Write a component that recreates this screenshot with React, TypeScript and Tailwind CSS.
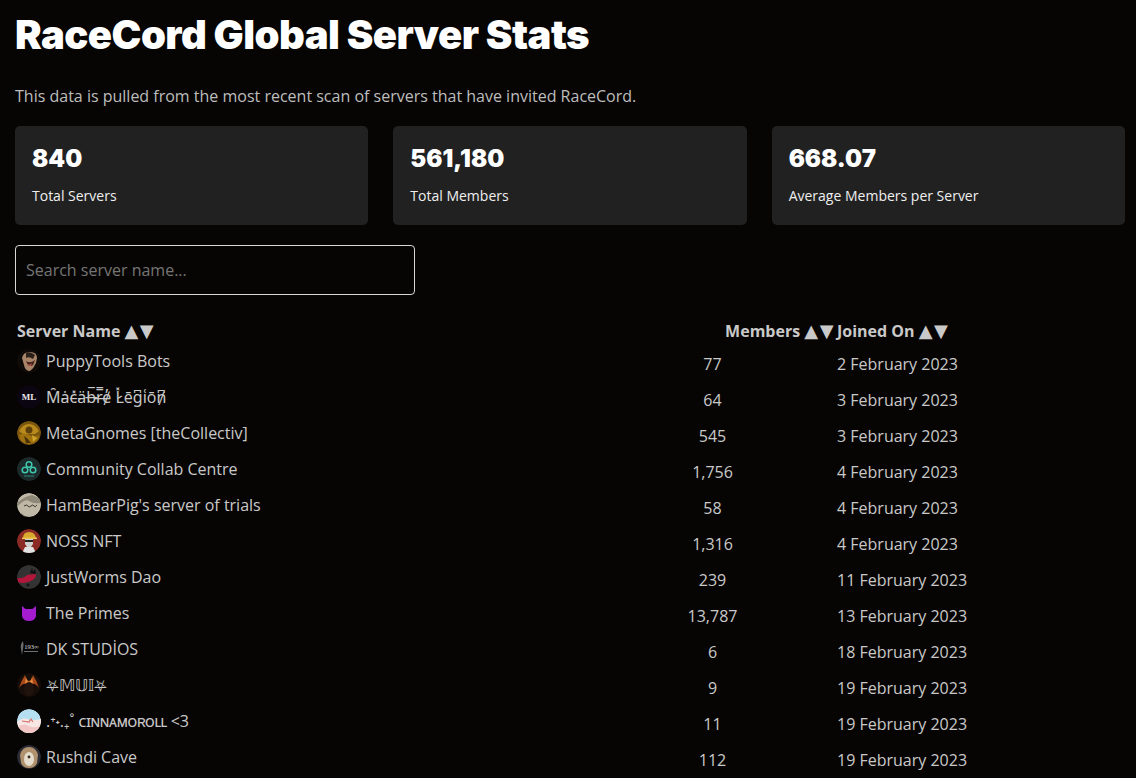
const stats = [
  { value: "840", label: "Total Servers" },
  { value: "561,180", label: "Total Members" },
  { value: "668.07", label: "Average Members per Server" },
];

function Avatar({ kind }: { kind: number }) {
  const shapes: Record<number, React.ReactNode> = {
    0: (
      <>
        <circle cx="12" cy="12" r="12" fill="#0e0b09" />
        <path d="M5 9q1-6 8-6t7 6l-1 5q-2 5-6 8-5 0-6-6z" fill="#a88469" />
        <path d="M9 4q4-2 9 2l-2 4q-4-3-7-1z" fill="#2b211b" />
        <path d="M9 12q4 3 9-1l-2 5q-3 2-5 0z" fill="#43201a" />
        <path d="M11 15q2 1 4-1l-1 3h-2z" fill="#a8524a" />
      </>
    ),
    1: (
      <>
        <circle cx="12" cy="12" r="12" fill="#0a0510" />
        <text x="12" y="15" textAnchor="middle" fontSize="9" fontWeight="700" fill="#ece6ec" fontFamily="'Liberation Serif',serif">
          ML
        </text>
      </>
    ),
    2: (
      <>
        <circle cx="12" cy="12" r="12" fill="#7b560f" />
        <path d="M2 10q4-7 10-7t10 7l-4 3H6z" fill="#b98a1c" />
        <circle cx="12" cy="9" r="3.5" fill="#5d3f0c" />
        <path d="M2 14q5-3 10 0t10 0q-1 8-10 9-9-1-10-9z" fill="#a0730f" />
        <path d="M7 15q5 3 7 7l-5 0z" fill="#4a3208" />
        <path d="M15 14l5 3-4 4z" fill="#d0a52c" />
      </>
    ),
    3: (
      <>
        <circle cx="12" cy="12" r="12" fill="#1d2a2b" />
        <circle cx="12" cy="7.5" r="2.8" fill="none" stroke="#3fc7ad" strokeWidth="1.5" />
        <circle cx="8" cy="13" r="2.8" fill="none" stroke="#3fc7ad" strokeWidth="1.5" />
        <circle cx="16" cy="13" r="2.8" fill="none" stroke="#3fc7ad" strokeWidth="1.5" />
        <path d="M7 19h10" stroke="#2f8b7b" strokeWidth="1" />
      </>
    ),
    4: (
      <>
        <circle cx="12" cy="12" r="12" fill="#c0b8a6" />
        <path d="M0 10Q8 3 15 2l9 4v4q-8 1-12-2T0 14z" fill="#8e8879" />
        <path d="M0 19q6 1 9 5H0z" fill="#8e8879" />
        <path d="M7 13q3-2 4 0t3 0 3 0 3-1" fill="none" stroke="#3d372e" strokeWidth="1" />
      </>
    ),
    5: (
      <>
        <circle cx="12" cy="12" r="12" fill="#8c2a25" />
        <path d="M6 9q0-6 6-6t7 6z" fill="#d9a92e" />
        <rect x="5" y="8.5" width="15" height="1.6" fill="#e8c34f" />
        <path d="M8 10h8v5l-2 3h-4l-2-3z" fill="#cfcfcf" />
        <path d="M8 11h8v2H8z" fill="#222222" />
        <path d="M5 24l3-6h8l3 6z" fill="#e2e2e2" />
      </>
    ),
    6: (
      <>
        <circle cx="12" cy="12" r="12" fill="#333333" />
        <path d="M0 13q6 1 10-3l9-1q1 5-8 8-6 2-10 0z" fill="#b3163a" />
        <path d="M13 8l2-5 1 4 2-3 1 5z" fill="#0f0f0f" />
        <circle cx="11" cy="20" r="1.5" fill="#151515" />
      </>
    ),
    7: (
      <>
        <circle cx="12" cy="12" r="12" fill="#060408" />
        <path d="M5 5l3.5 3h7L19 5v10q-1 5-7 5t-7-5z" fill="#a41bd0" />
      </>
    ),
    8: (
      <>
        <circle cx="12" cy="12" r="12" fill="#050505" />
        <path d="M4 12q-1-5 2-8 1 3 0 8l-1 6z" fill="#6a6a6a" />
        <text x="14.5" y="12" textAnchor="middle" fontSize="6.5" fill="#dddddd" fontFamily="'Liberation Serif',serif">
          193∞
        </text>
        <path d="M7 14.5h14" stroke="#8a8a8a" strokeWidth="0.8" />
      </>
    ),
    9: (
      <>
        <circle cx="12" cy="12" r="12" fill="#170d08" />
        <path d="M2 15Q4 8 8 2q1 5 4 6 3-1 4-6 4 6 6 13-3-4-5-4H7q-2 0-5 4z" fill="#a8481a" />
        <path d="M9 3q0 4 3 6 3-2 3-6l1 7H8z" fill="#e08a3a" />
        <ellipse cx="12" cy="16" rx="5" ry="7" fill="#20120c" />
      </>
    ),
    10: (
      <>
        <circle cx="12" cy="12" r="12" fill="#b5dff0" />
        <path d="M0 13q6-5 10-3t14 0v14H0z" fill="#f6e6e4" />
        <path d="M0 18q6-4 12-1t12-1v8H0z" fill="#f2c6c4" />
        <path d="M5 12l7 1 2-3 2 3" stroke="#d8706e" strokeWidth="1.2" fill="none" />
      </>
    ),
    11: (
      <>
        <circle cx="12" cy="12" r="12" fill="#2b2c35" />
        <path d="M3 10q2-8 9-8t9 8l-1 8q-2 5-8 5t-8-5z" fill="#b0916d" />
        <ellipse cx="12" cy="14" rx="5" ry="7" fill="#e4dccd" />
        <circle cx="12" cy="12" r="1.4" fill="#3b2a1f" />
      </>
    ),
  };
  return (
    <svg viewBox="0 0 24 24" className="h-6 w-6 shrink-0 rounded-full">
      {shapes[kind]}
    </svg>
  );
}

const macabre =
  "M\u0311a\u0307\u0335c\u033d\u0335a\u0308\u0335b\u0305\u0336r\u033f\u0336e\u0313\u0338 L\u033d\u0337e\u0304g\u0346i\u0351o\u0304n\u0346\u0338";

const rows: { name: React.ReactNode; key: string; members: string; joined: string }[] = [
  { key: "puppy", name: "PuppyTools Bots", members: "77", joined: "2 February 2023" },
  { key: "macabre", name: macabre, members: "64", joined: "3 February 2023" },
  { key: "gnomes", name: "MetaGnomes [theCollectiv]", members: "545", joined: "3 February 2023" },
  { key: "collab", name: "Community Collab Centre", members: "1,756", joined: "4 February 2023" },
  { key: "ham", name: "HamBearPig's server of trials", members: "58", joined: "4 February 2023" },
  { key: "noss", name: "NOSS NFT", members: "1,316", joined: "4 February 2023" },
  { key: "worms", name: "JustWorms Dao", members: "239", joined: "11 February 2023" },
  { key: "primes", name: "The Primes", members: "13,787", joined: "13 February 2023" },
  { key: "dk", name: "DK STUDİOS", members: "6", joined: "18 February 2023" },
  { key: "mui", name: "⛧𝕄𝕌𝕀⛧", members: "9", joined: "19 February 2023" },
  {
    key: "cinna",
    name: (
      <>
        .⁺˖.₊˚ <span className="tracking-[-0.8px]">ᴄɪɴɴᴀᴍᴏʀᴏʟʟ</span> {"<3"}
      </>
    ),
    members: "11",
    joined: "19 February 2023",
  },
  { key: "rushdi", name: "Rushdi Cave", members: "112", joined: "19 February 2023" },
];

function Arrows() {
  return <span className="font-['DejaVu_Sans',sans-serif] text-[18px] leading-none font-normal tracking-[1.5px]">▲▼</span>;
}

export default function App() {
  return (
    <div className="h-[778px] overflow-hidden bg-[#070503] px-[15px] font-['Open_Sans','Noto_Sans',sans-serif] text-[#c9c9c9]">
      <h1 className="pt-[14px] font-['Inter',sans-serif] text-[40px] leading-[42px] font-black tracking-[-0.55px] text-white">
        RaceCord Global Server Stats
      </h1>
      <p className="mt-[29px] text-[16px] leading-[22px] text-[#bdbdbd]">
        This data is pulled from the most recent scan of servers that have invited RaceCord.
      </p>
      <div className="mt-[19px] mr-[-4px] grid grid-cols-3 gap-[25px]">
        {stats.map((s) => (
          <div key={s.label} className="h-[99px] rounded-[5px] bg-[#212121] px-[17px] pt-[16px]">
            <div className="font-['Inter',sans-serif] text-[24px] leading-[34px] font-black text-white">{s.value}</div>
            <div className="mt-[10px] text-[14px] leading-[20px] text-[#efefef]">{s.label}</div>
          </div>
        ))}
      </div>
      <input
        placeholder="Search server name..."
        className="mt-[20px] block h-[50px] w-[400px] rounded-[4px] border border-[#d8d8d8] bg-transparent px-[10px] text-[16px] placeholder:text-[#757575]"
      />
      <table className="mt-[24px] w-[1000px] table-fixed border-collapse">
        <thead>
          <tr className="h-[27px] text-[16px] font-bold text-[#c9c9c9]">
            <th className="w-[630px] px-[2px] text-left align-top font-bold">
              Server Name <Arrows />
            </th>
            <th className="w-[190px] text-right align-top font-bold">
              Members <Arrows />
            </th>
            <th className="px-[2px] text-left align-top font-bold">
              Joined On <Arrows />
            </th>
          </tr>
        </thead>
        <tbody>
          {rows.map((r, i) => (
            <tr key={r.key} className="h-[36px] text-[16px]">
              <td className="px-[2px] pb-[6px]">
                <div className="flex items-center gap-[5px]">
                  <Avatar kind={i} />
                  <span className="whitespace-nowrap">{r.name}</span>
                </div>
              </td>
              <td className="pr-[55px] text-center">{r.members}</td>
              <td className="px-[2px]">{r.joined}</td>
            </tr>
          ))}
        </tbody>
      </table>
    </div>
  );
}
